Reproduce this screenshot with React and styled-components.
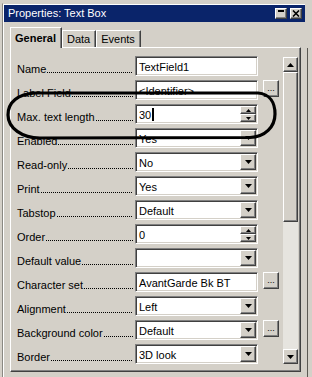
import React from 'react';
import styled, { createGlobalStyle, css } from 'styled-components';

const GlobalStyle = createGlobalStyle`
  body {
    margin: 0;
    background: #d4d0c8;
    font-family: "Liberation Sans", Arial, sans-serif;
    font-size: 11px;
    color: #000;
  }
`;

const raised = css`
  box-sizing: border-box;
  background: #d4d0c8;
  border: 1px solid;
  border-color: #fff #404040 #404040 #fff;
  box-shadow: inset -1px -1px #808080;
`;

const Screen = styled.div`
  position: relative;
  width: 312px;
  height: 377px;
  overflow: hidden;
  box-sizing: border-box;
  padding: 3px 0 0 2px;
  display: flex;
  background: #d4d0c8;
`;

const Window = styled.div`
  flex: none;
  width: 305px;
  height: 420px;
  box-sizing: border-box;
  border-left: 1px solid #8a8882;
  border-top: 1px solid #d4d0c8;
  border-right: 2px solid #d4d0c8;
  box-shadow: inset 1px 1px #fff;
  padding: 1px 0 0 1px;
`;

const Edge = styled.div`
  flex: 1;
  margin-top: 45px;
  border-left: 1px solid #5a5852;
`;

const TitleBar = styled.div`
  height: 17px;
  background: #0a246a;
  display: flex;
  align-items: center;
  padding: 0 3px 0 4px;
`;

const Title = styled.div`
  color: #fff;
  font-size: 11px;
  line-height: 17px;
  flex: 1;
`;

const CaptionButtons = styled.div`
  display: flex;
  gap: 3px;
`;

const CaptionButton = styled.div`
  ${raised};
  width: 12px;
  height: 11px;
  display: flex;
  align-items: center;
  justify-content: center;
`;

const Body = styled.div`
  padding: 5px 4px 0 6px;
`;

const TabStrip = styled.div`
  display: flex;
  align-items: flex-end;
  height: 20px;
  position: relative;
  z-index: 1;
`;

const Tab = styled.div`
  box-sizing: border-box;
  height: ${p => (p.$active ? 21 : 17)}px;
  margin-bottom: ${p => (p.$active ? -1 : 0)}px;
  padding: ${p => (p.$active ? 3 : 1)}px 5px 0 4px;
  line-height: 14px;
  font-weight: ${p => (p.$active ? 'bold' : 'normal')};
  background: #d4d0c8;
  border: 1px solid;
  border-bottom: none;
  border-color: #fff #404040 transparent #fff;
  box-shadow: inset -1px 0 #808080;
`;

const Panel = styled.div`
  box-sizing: border-box;
  width: 291px;
  height: 325px;
  border: 1px solid;
  border-color: #fff #404040 #404040 #fff;
  box-shadow: inset -1px -1px #808080;
  padding: 8px 2px 0 6px;
  display: flex;
  gap: 4px;
  overflow: hidden;
`;

const List = styled.div`
  width: 262px;
  display: flex;
  flex-direction: column;
  gap: 4px;
`;

const Row = styled.div`
  display: grid;
  grid-template-columns: 118px 123px 21px;
  height: 20px;
`;

const Label = styled.div`
  display: flex;
  align-items: flex-end;
  height: 20px;
  line-height: 14px;
  white-space: nowrap;
`;

const Leader = styled.div`
  flex: 1;
  height: 1px;
  margin: 0 2px 3px 1px;
  background-image: linear-gradient(to right, #000 1px, transparent 1px);
  background-size: 2px 1px;
`;

const Field = styled.div`
  box-sizing: border-box;
  height: 20px;
  background: #fff;
  border: 1px solid;
  border-color: #808080 #fff #fff #808080;
  box-shadow: inset 1px 1px #404040, inset -1px -1px #d4d0c8;
  padding: 1px;
  display: flex;
`;

const FieldText = styled.div`
  flex: 1;
  padding: 2px 0 0 2px;
  line-height: 14px;
  white-space: nowrap;
  overflow: hidden;
  display: flex;
  align-items: flex-start;
`;

const Caret = styled.span`
  display: inline-block;
  width: 2px;
  height: 13px;
  margin: 0 0 0 1px;
  background: #000;
`;

const DropButton = styled.div`
  ${raised};
  width: 16px;
  display: flex;
  align-items: center;
  justify-content: center;
`;

const Spin = styled.div`
  width: 16px;
  display: flex;
  flex-direction: column;
`;

const SpinButton = styled.div`
  ${raised};
  flex: 1;
  display: flex;
  align-items: center;
  justify-content: center;
`;

const DotsButton = styled.div`
  ${raised};
  margin-left: 5px;
  height: 17px;
  display: flex;
  align-items: flex-end;
  justify-content: center;
  font-size: 9px;
  line-height: 9px;
  padding-bottom: 3px;
`;

const ScrollBar = styled.div`
  margin-top: 1px;
  width: 15px;
  height: 307px;
  display: flex;
  flex-direction: column;
`;

const ScrollButton = styled.div`
  ${raised};
  height: 15px;
  display: flex;
  align-items: center;
  justify-content: center;
`;

const Thumb = styled.div`
  ${raised};
  height: 150px;
`;

const Track = styled.div`
  flex: 1;
  background: #e6e4df;
`;

const Annotation = styled.svg`
  position: absolute;
  left: 0;
  top: 0;
  pointer-events: none;
  z-index: 5;
`;

const Arrow = ({ dir = 'down', w = 7, h = 4 }) => (
  <svg width={w} height={h} viewBox={`0 0 ${w} ${h}`}>
    <polygon
      points={dir === 'down' ? `0,0 ${w},0 ${w / 2},${h}` : `0,${h} ${w},${h} ${w / 2},0`}
      fill="#000"
    />
  </svg>
);

const rows = [
  { label: 'Name', value: 'TextField1', kind: 'text' },
  { label: 'Label Field', value: '<Identifier>', kind: 'text', more: true },
  { label: 'Max. text length', value: '30', kind: 'spin', caret: true },
  { label: 'Enabled', value: 'Yes', kind: 'select' },
  { label: 'Read-only', value: 'No', kind: 'select' },
  { label: 'Print', value: 'Yes', kind: 'select' },
  { label: 'Tabstop', value: 'Default', kind: 'select' },
  { label: 'Order', value: '0', kind: 'spin' },
  { label: 'Default value', value: '', kind: 'select' },
  { label: 'Character set', value: 'AvantGarde Bk BT', kind: 'text', more: true },
  { label: 'Alignment', value: 'Left', kind: 'select' },
  { label: 'Background color', value: 'Default', kind: 'select', more: true },
  { label: 'Border', value: '3D look', kind: 'select' },
];

const PropertyRow = ({ row }) => (
  <Row>
    <Label>
      {row.label}
      <Leader />
    </Label>
    <Field>
      <FieldText>
        {row.value}
        {row.caret && <Caret />}
      </FieldText>
      {row.kind === 'select' && (
        <DropButton>
          <Arrow />
        </DropButton>
      )}
      {row.kind === 'spin' && (
        <Spin>
          <SpinButton>
            <Arrow dir="up" w={5} h={3} />
          </SpinButton>
          <SpinButton>
            <Arrow w={5} h={3} />
          </SpinButton>
        </Spin>
      )}
    </Field>
    {row.more && <DotsButton>...</DotsButton>}
  </Row>
);

const App = () => (
  <>
    <GlobalStyle />
    <Screen>
      <Window>
        <TitleBar>
          <Title>Properties: Text Box</Title>
          <CaptionButtons>
            <CaptionButton>
              <svg width="8" height="8" viewBox="0 0 8 8">
                <rect x="1" y="0" width="6" height="2" fill="#000" />
              </svg>
            </CaptionButton>
            <CaptionButton>
              <svg width="8" height="7" viewBox="0 0 8 7">
                <path d="M1 0.5 L7 6.5 M7 0.5 L1 6.5" stroke="#000" strokeWidth="1.6" />
              </svg>
            </CaptionButton>
          </CaptionButtons>
        </TitleBar>
        <Body>
          <TabStrip>
            <Tab $active>General</Tab>
            <Tab>Data</Tab>
            <Tab>Events</Tab>
          </TabStrip>
          <Panel>
            <List>
              {rows.map(r => (
                <PropertyRow key={r.label} row={r} />
              ))}
            </List>
            <ScrollBar>
              <ScrollButton>
                <Arrow dir="up" />
              </ScrollButton>
              <Thumb />
              <Track />
              <ScrollButton>
                <Arrow />
              </ScrollButton>
            </ScrollBar>
          </Panel>
        </Body>
      </Window>
      <Edge />
      <Annotation width="312" height="377" viewBox="0 0 312 377">
        <path
          d="M35 93 L258 93 C270 94 275 103 275 114 C275 127 265 137 250 137.5 L40 138 C22 138 8 128 8 115 C8 102 18 94 35 93 Z"
          fill="none"
          stroke="#000"
          strokeWidth="3.2"
        />
      </Annotation>
    </Screen>
  </>
);

export default App;
